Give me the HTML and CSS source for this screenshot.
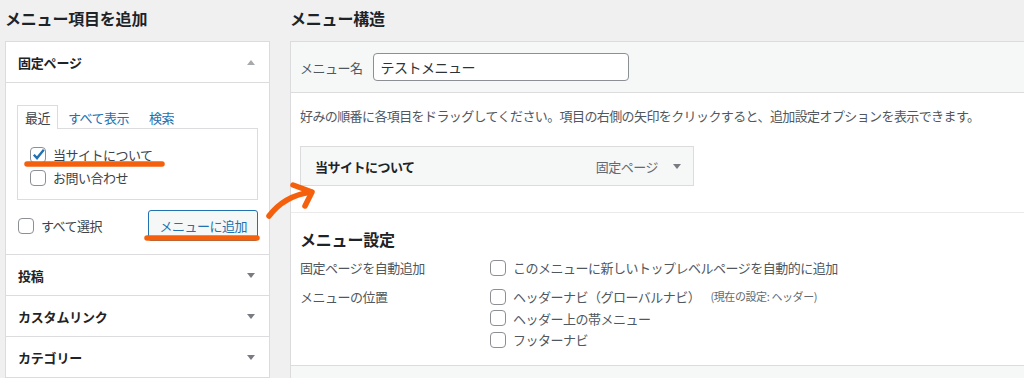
FILE: index.html
```html
<!DOCTYPE html>
<html lang="ja">
<head>
    <meta charset="UTF-8">
    <meta name="viewport" content="width=device-width, initial-scale=1.0">
    <title>メニュー</title>
    <link rel="stylesheet" href="styles.css">
</head>
<body>
    <div class="page">
        <div class="col-left">
            <h2 class="col-title">メニュー項目を追加</h2>
            <div class="accordion">
                <div class="acc-section open">
                    <div class="acc-title">固定ページ<span class="tri up"></span></div>
                    <div class="acc-body">
                        <ul class="tabs">
                            <li class="active">最近</li>
                            <li>すべて表示</li>
                            <li>検索</li>
                        </ul>
                        <div class="tab-panel">
                            <label class="check-row">
                                <span class="cb"><svg viewBox="0 0 16 16"><path d="M3.6 8.2 L6.6 11.4 L13 3.6"/></svg></span>当サイトについて
                            </label>
                            <label class="check-row"><span class="cb"></span>お問い合わせ</label>
                        </div>
                        <div class="acc-actions">
                            <label class="check-row"><span class="cb"></span>すべて選択</label>
                            <span class="button">メニューに追加</span>
                        </div>
                    </div>
                </div>
                <div class="acc-section"><div class="acc-title">投稿<span class="tri"></span></div></div>
                <div class="acc-section"><div class="acc-title">カスタムリンク<span class="tri"></span></div></div>
                <div class="acc-section"><div class="acc-title">カテゴリー<span class="tri"></span></div></div>
            </div>
        </div>

        <div class="col-right">
            <h2 class="col-title">メニュー構造</h2>
            <div class="menu-box">
                <div class="menu-name">
                    <span class="menu-name-label">メニュー名</span>
                    <span class="text-input">テストメニュー</span>
                </div>
                <div class="menu-body">
                    <p class="hint">好みの順番に各項目をドラッグしてください。項目の右側の矢印をクリックすると、追加設定オプションを表示できます。</p>
                    <div class="menu-item">
                        <span class="item-title">当サイトについて</span>
                        <span class="item-type">固定ページ</span>
                        <span class="tri"></span>
                    </div>
                </div>
                <div class="menu-settings">
                    <h3>メニュー設定</h3>
                    <div class="setting-row">
                        <div class="setting-label">固定ページを自動追加</div>
                        <div class="setting-input">
                            <label class="check-row"><span class="cb"></span>このメニューに新しいトップレベルページを自動的に追加</label>
                        </div>
                    </div>
                    <div class="setting-row">
                        <div class="setting-label">メニューの位置</div>
                        <div class="setting-input">
                            <label class="check-row"><span class="cb"></span>ヘッダーナビ（グローバルナビ）<span class="note">(現在の設定: ヘッダー)</span></label>
                            <label class="check-row"><span class="cb"></span>ヘッダー上の帯メニュー</label>
                            <label class="check-row"><span class="cb"></span>フッターナビ</label>
                        </div>
                    </div>
                </div>
                <div class="menu-footer"></div>
            </div>
        </div>
    </div>

    <!-- hand-drawn marks over the screenshot -->
    <svg class="marks" width="1024" height="378" viewBox="0 0 1024 378">
        <path d="M27 164 L162 164"/>
        <path d="M147 238 L257 238"/>
        <path d="M269 216 Q284 196 311 192"/>
        <path d="M293 185 L312 192 L305 206"/>
    </svg>
</body>
</html>
```

FILE: styles.css
```css
html, body {
    margin: 0;
    padding: 0;
}
body {
    background-color: #f0f0f1;
    color: #3c434a;
    font-family: "Noto Sans CJK JP", "Noto Sans", sans-serif;
    font-size: 13px;
    letter-spacing: -0.5px;
    overflow: hidden;
    width: 1024px;
    height: 378px;
    position: relative;
}
.page {
    display: flex;
    gap: 20px;
    padding-left: 5px;
}
.col-left {
    width: 265px;
    flex: none;
}
.col-right {
    flex: 1;
    margin-right: -20px;
}
.col-title {
    font-size: 16px;
    font-weight: 600;
    color: #1d2327;
    line-height: 24px;
    letter-spacing: -0.2px;
    margin: 6px 0 11px;
}

/* left accordion */
.accordion {
    background: #fff;
    border: 1px solid #dcdcde;
}
.acc-section {
    border-bottom: 1px solid #dcdcde;
}
.acc-section:last-child {
    border-bottom: none;
}
.acc-title {
    height: 40px;
    display: flex;
    align-items: center;
    justify-content: space-between;
    padding: 0 14px 0 12px;
    font-weight: 700;
    color: #1d2327;
    letter-spacing: -0.2px;
}
.open .acc-title {
    border-bottom: 1px solid #dcdcde;
}
.tri {
    width: 0;
    height: 0;
    border-left: 4px solid transparent;
    border-right: 4px solid transparent;
    border-top: 5px solid #787c82;
}
.tri.up {
    border-top: none;
    border-bottom: 5px solid #a7aaad;
}
.acc-body {
    padding: 22px 11px 13px;
}
.tabs {
    list-style: none;
    margin: 0 0 -1px;
    padding: 0;
    display: flex;
    gap: 2px;
    position: relative;
}
.tabs li {
    height: 23px;
    line-height: 23px;
    padding: 0 7px;
    color: #2271b1;
    border: 1px solid transparent;
    border-bottom: none;
}
.tabs li:nth-child(3) {
    margin-left: 2px;
}
.tabs li.active {
    color: #3c434a;
    background: #fff;
    border-color: #dcdcde;
}
.tab-panel {
    border: 1px solid #dcdcde;
    padding: 14px 12px 10px;
}
.check-row {
    display: flex;
    align-items: center;
    gap: 7px;
    line-height: 23px;
    color: #3c434a;
}
.cb {
    width: 14px;
    height: 14px;
    border: 1px solid #8c8f94;
    border-radius: 4px;
    background: #fff;
    flex: none;
    position: relative;
}
.cb svg {
    position: absolute;
    left: -1px;
    top: -2px;
    width: 17px;
    height: 17px;
    fill: none;
    stroke: #2271b1;
    stroke-width: 2.2;
}
.acc-actions {
    display: flex;
    align-items: center;
    justify-content: space-between;
    margin-top: 10px;
    padding-left: 1px;
}
.button {
    height: 29px;
    line-height: 29px;
    padding: 0 10px;
    border: 1px solid #2271b1;
    border-radius: 3px;
    background: #f6f7f7;
    color: #2271b1;
}

/* right side */
.menu-box {
    background: #fff;
    border: 1px solid #dcdcde;
    border-bottom: none;
}
.menu-name {
    height: 50px;
    background: #f6f7f7;
    border-bottom: 1px solid #dcdcde;
    display: flex;
    align-items: center;
    padding-left: 9px;
    gap: 10px;
}
.menu-name-label {
    color: #50575e;
}
.text-input {
    width: 240px;
    height: 26px;
    line-height: 26px;
    padding: 0 7px;
    border: 1px solid #8c8f94;
    border-radius: 4px;
    background: #fff;
    color: #2c3338;
    font-size: 14px;
}
.menu-body {
    padding: 13px 9px 26px;
}
.hint {
    margin: 0 0 20px;
    line-height: 20px;
    color: #50575e;
    letter-spacing: -0.6px;
}
.menu-item {
    width: 366px;
    height: 38px;
    border: 1px solid #dcdcde;
    background: #f6f7f7;
    display: flex;
    align-items: center;
    padding: 0 12px 0 14px;
}
.item-title {
    font-weight: 700;
    color: #1d2327;
    flex: 1;
}
.item-type {
    color: #646970;
    margin-right: 15px;
}
.menu-settings {
    border-top: 1px solid #ebebeb;
    padding: 14px 9px 14px;
}
.menu-settings h3 {
    font-size: 16px;
    font-weight: 600;
    color: #1d2327;
    line-height: 24px;
    letter-spacing: -0.2px;
    margin: 0 0 6px;
}
.setting-row {
    display: flex;
    margin-bottom: 7px;
}
.setting-row:last-child {
    margin-bottom: 0;
}
.setting-label {
    width: 190px;
    line-height: 22px;
    color: #50575e;
}
.setting-input .check-row {
    line-height: 21.5px;
    color: #50575e;
}
.note {
    font-size: 11px;
    color: #646970;
    margin-left: 3px;
    letter-spacing: -0.4px;
}
.menu-footer {
    height: 12px;
    background: #f6f7f7;
    border-top: 1px solid #dcdcde;
}

.marks {
    position: absolute;
    left: 0;
    top: 0;
    pointer-events: none;
    fill: none;
    stroke: #f4600c;
    stroke-width: 5.5;
    stroke-linecap: round;
    stroke-linejoin: round;
}
```
